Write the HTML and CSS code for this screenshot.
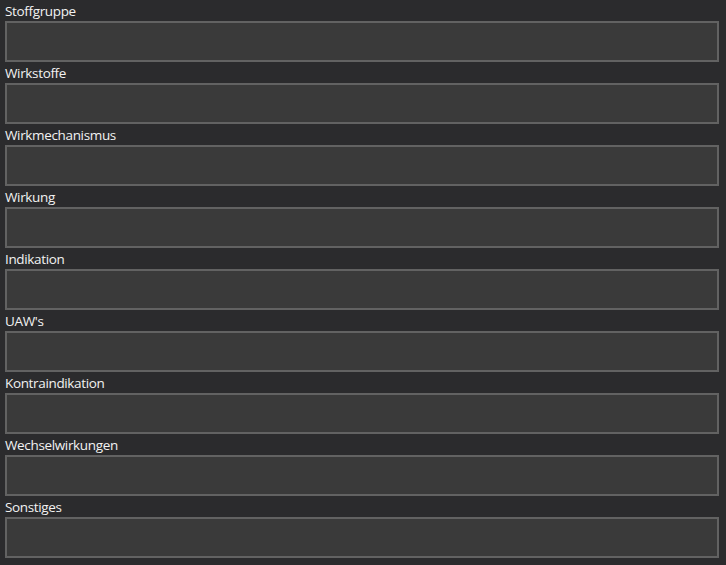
FILE: index.html
```html
<!DOCTYPE html>
<html>
<head>
<meta charset="utf-8">
<link rel="stylesheet" href="styles.css">
</head>
<body>
<div class="form">
  <div class="field"><div class="label">Stoffgruppe</div><div class="box"></div></div>
  <div class="field"><div class="label">Wirkstoffe</div><div class="box"></div></div>
  <div class="field"><div class="label">Wirkmechanismus</div><div class="box"></div></div>
  <div class="field"><div class="label">Wirkung</div><div class="box"></div></div>
  <div class="field"><div class="label">Indikation</div><div class="box"></div></div>
  <div class="field"><div class="label">UAW's</div><div class="box"></div></div>
  <div class="field"><div class="label">Kontraindikation</div><div class="box"></div></div>
  <div class="field"><div class="label">Wechselwirkungen</div><div class="box"></div></div>
  <div class="field"><div class="label">Sonstiges</div><div class="box"></div></div>
</div>
</body>
</html>
```
FILE: styles.css
```css
html, body {
  margin: 0;
  padding: 0;
  background: #2b2b2d;
  height: 100%;
}
.form {
  display: flex;
  flex-direction: column;
  padding: 0 7px 0 5px;
}
.field {
  display: flex;
  flex-direction: column;
  height: 62px;
}
.label {
  height: 21px;
  box-sizing: border-box;
  padding-top: 1px;
  line-height: 20px;
  font-family: "Open Sans", "Noto Sans", sans-serif;
  font-size: 13.5px;
  letter-spacing: -0.35px;
  color: #f2f2f2;
}
.box {
  height: 41px;
  box-sizing: border-box;
  background: #3a3a3a;
  border: 2px solid #626262;
}
```
